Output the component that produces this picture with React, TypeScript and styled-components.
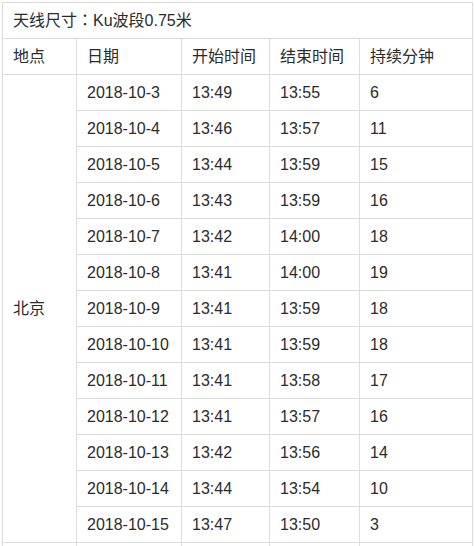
import React from "react";
import styled, { createGlobalStyle } from "styled-components";

const GlobalStyle = createGlobalStyle`
  html, body { margin: 0; padding: 0; background: #fff; }
  body { padding: 2px 0 0 2px; font-family: "Liberation Sans", "Noto Sans CJK SC", sans-serif; }
`;

const Table = styled.table`
  border-collapse: collapse;
  table-layout: fixed;
  width: 470px;
  font-size: 16px;
  color: #2b2b2b;
`;

const Cell = styled.td`
  border: 1px solid #dcdcdc;
  padding: 0 10px;
  line-height: 35px;
  height: 35px;
  box-sizing: border-box;
  white-space: nowrap;
  vertical-align: middle;
  text-align: left;
`;

const HeadCell = styled(Cell).attrs({ as: "th" })`
  font-weight: normal;
`;

const Colon = styled.span`
  font-family: "Noto Sans CJK JP", sans-serif;
  line-height: 0;
`;

type Row = [string, string, string, string];

const rows: Row[] = [
  ["2018-10-3", "13:49", "13:55", "6"],
  ["2018-10-4", "13:46", "13:57", "11"],
  ["2018-10-5", "13:44", "13:59", "15"],
  ["2018-10-6", "13:43", "13:59", "16"],
  ["2018-10-7", "13:42", "14:00", "18"],
  ["2018-10-8", "13:41", "14:00", "19"],
  ["2018-10-9", "13:41", "13:59", "18"],
  ["2018-10-10", "13:41", "13:59", "18"],
  ["2018-10-11", "13:41", "13:58", "17"],
  ["2018-10-12", "13:41", "13:57", "16"],
  ["2018-10-13", "13:42", "13:56", "14"],
  ["2018-10-14", "13:44", "13:54", "10"],
  ["2018-10-15", "13:47", "13:50", "3"],
];

export default function App() {
  return (
    <>
      <GlobalStyle />
      <Table>
        <colgroup>
          <col style={{ width: 74 }} />
          <col style={{ width: 105 }} />
          <col style={{ width: 88 }} />
          <col style={{ width: 90 }} />
          <col style={{ width: 113 }} />
        </colgroup>
        <thead>
          <tr>
            <HeadCell colSpan={5}>
              天线尺寸<Colon>：</Colon>Ku波段0.75米
            </HeadCell>
          </tr>
          <tr>
            <HeadCell>地点</HeadCell>
            <HeadCell>日期</HeadCell>
            <HeadCell>开始时间</HeadCell>
            <HeadCell>结束时间</HeadCell>
            <HeadCell>持续分钟</HeadCell>
          </tr>
        </thead>
        <tbody>
          {rows.map((r, i) => (
            <tr key={r[0]}>
              {i === 0 && <Cell rowSpan={rows.length}>北京</Cell>}
              <Cell>{r[0]}</Cell>
              <Cell>{r[1]}</Cell>
              <Cell>{r[2]}</Cell>
              <Cell>{r[3]}</Cell>
            </tr>
          ))}
          <tr>
            <Cell />
            <Cell />
            <Cell />
            <Cell />
            <Cell />
          </tr>
        </tbody>
      </Table>
    </>
  );
}
